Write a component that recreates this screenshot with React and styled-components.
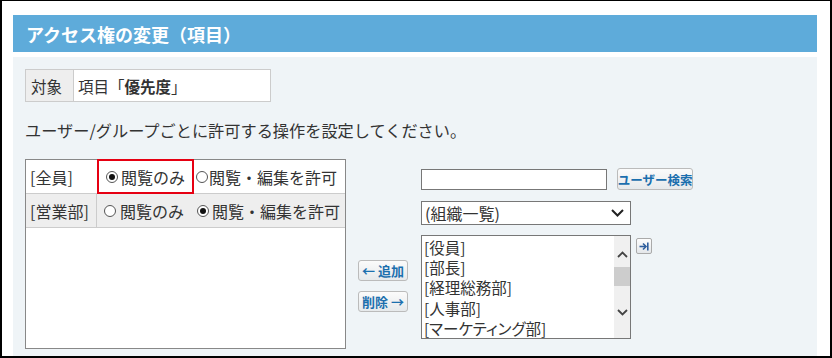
import React from 'react';
import styled, { createGlobalStyle } from 'styled-components';

const GlobalStyle = createGlobalStyle`
    html, body {
        margin: 0;
        padding: 0;
        background: #fff;
    }
    body {
        font-family: "Noto Sans CJK JP", "Liberation Sans", sans-serif;
        color: #333;
    }
`

const Frame = styled.div`
    box-sizing: border-box;
    width: 832px;
    height: 358px;
    border: 2px solid #000;
    border-top-width: 1px;
    padding: 14px 13px 0 11px;
    display: flex;
    flex-direction: column;
    gap: 5px;
    background: #fff;
`

const Header = styled.div`
    height: 37px;
    background: #5eabda;
    color: #fff;
    font-weight: 700;
    font-size: 18px;
    display: flex;
    align-items: center;
    padding-left: 13px;
`

const Content = styled.div`
    flex: 1;
    background: #eff4f7;
    padding: 12px 12px 0 12px;
    display: flex;
    flex-direction: column;
`

const TargetTable = styled.div`
    display: flex;
    width: 246px;
    height: 33px;
    box-sizing: border-box;
    border: 1px solid #ccc;
    font-size: 15.5px;
`

const TargetLabel = styled.div`
    width: 48px;
    background: #eee;
    border-right: 1px solid #ccc;
    display: flex;
    align-items: center;
    padding-left: 5px;
    box-sizing: border-box;
`

const TargetValue = styled.div`
    flex: 1;
    background: #fff;
    display: flex;
    align-items: center;
    padding-left: 4px;
    b { font-weight: 700; }
`

const Instruction = styled.p`
    margin: 17px 0 0 0;
    font-size: 16.2px;
    line-height: 22px;
`

const MainRow = styled.div`
    display: flex;
    margin-top: 18px;
`

const RightsTable = styled.div`
    width: 321px;
    height: 190px;
    box-sizing: border-box;
    border: 1px solid #888;
    background: #fff;
    display: flex;
    flex-direction: column;
`

const Row = styled.div`
    display: grid;
    grid-template-columns: 71px 1fr;
    height: 33px;
    background: ${p => (p.$grey ? '#eee' : '#fff')};
    border-bottom: 1px solid #ccc;
    font-size: 16px;
`

const NameCell = styled.div`
    display: flex;
    align-items: center;
    padding-left: 4px;
    border-right: 1px solid ${p => (p.$divider ? '#ccc' : 'transparent')};
`

const OptionCell = styled.div`
    display: flex;
    align-items: stretch;
`

const Option = styled.label`
    display: flex;
    align-items: center;
    box-sizing: border-box;
    width: ${p => p.$width || 'auto'};
    padding-left: ${p => p.$pad || 0}px;
    gap: ${p => p.$gap || 3}px;
    border: ${p => (p.$highlight ? '2px solid #e60012' : 'none')};
    margin-top: ${p => (p.$highlight ? '-1px' : '0')};
    margin-bottom: ${p => (p.$highlight ? '-1px' : '0')};
    white-space: nowrap;
`

const Radio = styled.span`
    width: 12px;
    height: 12px;
    box-sizing: border-box;
    border: 1px solid #555;
    border-radius: 50%;
    background: #fff;
    display: flex;
    align-items: center;
    justify-content: center;
    flex-shrink: 0;
    &::after {
        content: '';
        width: 6px;
        height: 6px;
        border-radius: 50%;
        background: ${p => (p.$checked ? '#111' : 'transparent')};
    }
`

const MoveColumn = styled.div`
    display: flex;
    flex-direction: column;
    gap: 10px;
    padding-top: 101px;
    margin-left: 12px;
`

const SmallButton = styled.button`
    box-sizing: border-box;
    height: ${p => p.$h || 21}px;
    width: ${p => p.$w || 'auto'};
    padding: 0 3px;
    border: 1px solid #bbb;
    border-radius: 3px;
    background: linear-gradient(#fbfbfb, #e6e9eb);
    color: #1b6fae;
    font-family: "Noto Sans CJK JP", sans-serif;
    font-weight: 700;
    font-size: ${p => p.$fs || 13}px;
    display: flex;
    align-items: center;
    justify-content: center;
    gap: 3px;
    white-space: nowrap;
`

const PickerColumn = styled.div`
    display: flex;
    flex-direction: column;
    margin-left: 13px;
    padding-top: 9px;
`

const SearchLine = styled.div`
    display: flex;
    align-items: center;
    gap: 10px;
`

const TextBox = styled.div`
    width: 186px;
    height: 21px;
    box-sizing: border-box;
    border: 1px solid #777;
    background: #fff;
`

const SelectBox = styled.div`
    width: 210px;
    height: 24px;
    box-sizing: border-box;
    border: 1px solid #777;
    background: #fff;
    margin-top: 11px;
    display: flex;
    align-items: center;
    justify-content: space-between;
    padding: 0 6px 0 3px;
    font-size: 16px;
`

const ListLine = styled.div`
    display: flex;
    align-items: flex-start;
    gap: 5px;
    margin-top: 10px;
`

const ListBox = styled.div`
    width: 210px;
    height: 104px;
    box-sizing: border-box;
    border: 1px solid #777;
    background: #fff;
    display: flex;
    overflow: hidden;
`

const Items = styled.div`
    flex: 1;
    padding: 1px 0 0 2px;
    font-size: 15.5px;
    line-height: 20.2px;
    font-feature-settings: "palt";
    white-space: nowrap;
`

const ScrollTrack = styled.div`
    width: 16px;
    background: #f0f0f0;
    display: flex;
    flex-direction: column;
    align-items: center;
    padding-top: 15px;
    box-sizing: border-box;
`

const Thumb = styled.div`
    width: 16px;
    height: 19px;
    background: #cdcdcd;
    margin-top: 9px;
`

const IconButton = styled.div`
    width: 16px;
    height: 16px;
    box-sizing: border-box;
    border: 1px solid #aaa;
    border-radius: 2px;
    background: linear-gradient(#fdfdfd, #e4e7ea);
    display: flex;
    align-items: center;
    justify-content: center;
    margin-top: 3px;
`

const Chevron = ({ up, style }) => (
    <svg width="11" height="7" viewBox="0 0 11 7" style={style}>
        <path
            d={up ? 'M1 6 L5.5 1.5 L10 6' : 'M1 1 L5.5 5.5 L10 1'}
            fill="none"
            stroke="#444"
            strokeWidth="1.8"
        />
    </svg>
)

const App = () => {
    return (
        <>
            <GlobalStyle />
            <Frame>
                <Header>アクセス権の変更（項目）</Header>
                <Content>
                    <TargetTable>
                        <TargetLabel>対象</TargetLabel>
                        <TargetValue>項目「<b>優先度</b>」</TargetValue>
                    </TargetTable>
                    <Instruction>ユーザー/グループごとに許可する操作を設定してください。</Instruction>
                    <MainRow>
                        <RightsTable>
                            <Row>
                                <NameCell>[全員]</NameCell>
                                <OptionCell>
                                    <Option $highlight $width="97px" $pad={7}>
                                        <Radio $checked />閲覧のみ
                                    </Option>
                                    <Option $pad={2} $gap={1}>
                                        <Radio />閲覧・編集を許可
                                    </Option>
                                </OptionCell>
                            </Row>
                            <Row $grey>
                                <NameCell $divider>[営業部]</NameCell>
                                <OptionCell>
                                    <Option $width="97px" $pad={7} $gap={4}>
                                        <Radio />閲覧のみ
                                    </Option>
                                    <Option $pad={3} $gap={3}>
                                        <Radio $checked />閲覧・編集を許可
                                    </Option>
                                </OptionCell>
                            </Row>
                        </RightsTable>
                        <MoveColumn>
                            <SmallButton $w="50px">← 追加</SmallButton>
                            <SmallButton $w="50px">削除 →</SmallButton>
                        </MoveColumn>
                        <PickerColumn>
                            <SearchLine>
                                <TextBox />
                                <SmallButton $h={22} $w="76px" $fs={12.5}>ユーザー検索</SmallButton>
                            </SearchLine>
                            <SelectBox>
                                <span>(組織一覧)</span>
                                <svg width="13" height="8" viewBox="0 0 13 8">
                                    <path d="M1 1 L6.5 6.5 L12 1" fill="none" stroke="#222" strokeWidth="2" />
                                </svg>
                            </SelectBox>
                            <ListLine>
                                <ListBox>
                                    <Items>
                                        <div>[役員]</div>
                                        <div>[部長]</div>
                                        <div>[経理総務部]</div>
                                        <div>[人事部]</div>
                                        <div>[マーケティング部]</div>
                                    </Items>
                                    <ScrollTrack>
                                        <Chevron up />
                                        <Thumb />
                                        <Chevron style={{ marginTop: 23 }} />
                                    </ScrollTrack>
                                </ListBox>
                                <IconButton>
                                    <svg width="10" height="9" viewBox="0 0 10 9">
                                        <path d="M0.5 4.5 H6.5" stroke="#2f5f9e" strokeWidth="1.6" />
                                        <path d="M4 1.5 L7 4.5 L4 7.5" fill="none" stroke="#2f5f9e" strokeWidth="1.6" />
                                        <path d="M8.8 0.5 V8.5" stroke="#2f5f9e" strokeWidth="1.6" />
                                    </svg>
                                </IconButton>
                            </ListLine>
                        </PickerColumn>
                    </MainRow>
                </Content>
            </Frame>
        </>
    )
}

export default App;
